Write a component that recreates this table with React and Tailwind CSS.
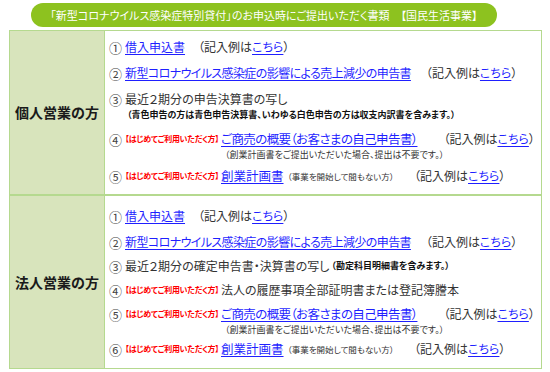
const Num = ({ children }) => (
	<span className="w-[13px] mr-[3px] text-[13px] leading-none text-[#444] flex items-center justify-center">{children}</span>
);

const Link = ({ children, className = "" }) => (
	<a className={"text-[#1f1fff] underline underline-offset-2 decoration-1 " + className}>{children}</a>
);

const Example = ({ className = "" }) => (
	<span className={"text-[12px] text-[#333] " + className}>
		（記入例は<Link>こちら</Link>）
	</span>
);

const Tag = () => (
	<span className="text-[8px] font-bold text-[#ff0000] tracking-[-0.3px] mr-[2px]">【はじめてご利用いただく方】</span>
);

const Row = ({ className = "", children }) => (
	<div className={"flex items-center whitespace-nowrap " + className}>{children}</div>
);

const Note = ({ className = "", children }) => (
	<div className={"whitespace-nowrap text-[9px] leading-[12px] h-[12px] " + className}>{children}</div>
);

const Label = ({ children }) => (
	<div className="w-[95px] shrink-0 bg-[#d8e4bc] border-r border-[#b5d98f] flex items-center justify-center">
		<span className="text-[14px] font-bold text-[#1a1a1a]">{children}</span>
	</div>
);

export default function App() {
	return (
		<div className="w-[550px] h-[372px] bg-white overflow-hidden font-['Noto_Sans_CJK_JP','Noto_Sans',sans-serif] [font-feature-settings:'palt'] text-[#333]">
			<div className="ml-[31px] mt-[3px] w-[466px] h-[24px] rounded-full bg-[#8dc21f] flex items-center justify-center text-white text-[11px] whitespace-nowrap">
				「新型コロナウイルス感染症特別貸付」のお申込時にご提出いただく書類　【国民生活事業】
			</div>
			<div className="ml-[9px] mt-[3px] w-[533px] border border-[#b5d98f]">
				<div className="flex h-[163px]">
					<Label>個人営業の方</Label>
					<div className="pl-[4px] flex flex-col text-[12px]">
						<Row className="h-[20px] mt-[6px]">
							<Num>①</Num>
							<Link>借入申込書</Link>
							<Example className="ml-[13px]" />
						</Row>
						<Row className="h-[20px] mt-[6px]">
							<Num>②</Num>
							<Link className="tracking-[-0.6px]">新型コロナウイルス感染症の影響による売上減少の申告書</Link>
							<Example className="ml-[15px]" />
						</Row>
						<Row className="h-[20px] mt-[6px]">
							<Num>③</Num>
							<span>最近２期分の申告決算書の写し</span>
						</Row>
						<Note className="ml-[18px] font-bold text-[#111]">
							（青色申告の方は青色申告決算書、いわゆる白色申告の方は収支内訳書を含みます。）
						</Note>
						<Row className="h-[20px] mt-[8px]">
							<Num>④</Num>
							<Tag />
							<Link className="text-[12.5px] tracking-[-0.6px] pr-[10px]">ご商売の概要（お客さまの自己申告書）</Link>
							<Example className="ml-[16px]" />
						</Row>
						<Note className="ml-[116px] text-[#333]">（創業計画書をご提出いただいた場合、提出は不要です。）</Note>
						<Row className="h-[20px] mt-[5px]">
							<Num>⑤</Num>
							<Tag />
							<Link className="text-[12.5px]">創業計画書</Link>
							<span className="text-[8.5px] ml-[4px]">（事業を開始して間もない方）</span>
							<Example className="ml-[20px]" />
						</Row>
					</div>
				</div>
				<div className="flex h-[174px] border-t-2 border-[#b5d98f]">
					<Label>法人営業の方</Label>
					<div className="pl-[4px] flex flex-col text-[12px]">
						<Row className="h-[20px] mt-[10px]">
							<Num>①</Num>
							<Link>借入申込書</Link>
							<Example className="ml-[13px]" />
						</Row>
						<Row className="h-[20px] mt-[6px]">
							<Num>②</Num>
							<Link className="tracking-[-0.6px]">新型コロナウイルス感染症の影響による売上減少の申告書</Link>
							<Example className="ml-[15px]" />
						</Row>
						<Row className="h-[20px] mt-[4px]">
							<Num>③</Num>
							<span>最近２期分の確定申告書・決算書の写し</span>
							<span className="text-[9px] font-bold text-[#111] ml-[2px]">（勘定科目明細書を含みます。）</span>
						</Row>
						<Row className="h-[20px] mt-[4px]">
							<Num>④</Num>
							<Tag />
							<span className="text-[12px]">法人の履歴事項全部証明書または登記簿謄本</span>
						</Row>
						<Row className="h-[20px] mt-[4px]">
							<Num>⑤</Num>
							<Tag />
							<Link className="text-[12.5px] tracking-[-0.6px] pr-[10px]">ご商売の概要（お客さまの自己申告書）</Link>
							<Example className="ml-[16px]" />
						</Row>
						<Note className="ml-[116px] text-[#333]">（創業計画書をご提出いただいた場合、提出は不要です。）</Note>
						<Row className="h-[20px] mt-[3px]">
							<Num>⑥</Num>
							<Tag />
							<Link className="text-[12.5px]">創業計画書</Link>
							<span className="text-[8.5px] ml-[4px]">（事業を開始して間もない方）</span>
							<Example className="ml-[20px]" />
						</Row>
					</div>
				</div>
			</div>
		</div>
	);
}
